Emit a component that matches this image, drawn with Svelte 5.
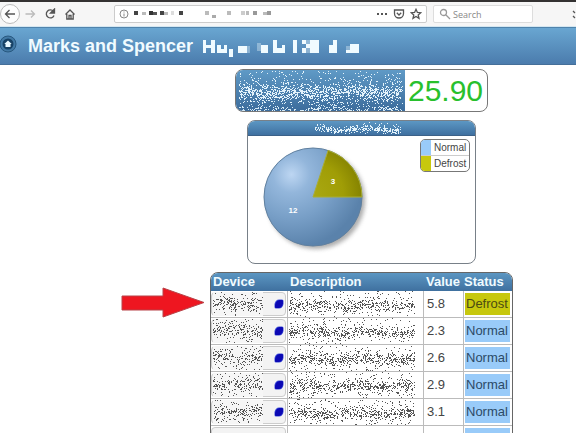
<script>
  const rows = [
    { value: '5.8', status: 'Defrost' },
    { value: '2.3', status: 'Normal' },
    { value: '2.6', status: 'Normal' },
    { value: '2.9', status: 'Normal' },
    { value: '3.1', status: 'Normal' },
    { value: '', status: '' }
  ];

  const titleBlocks = [
    [0, 3, 3, 13], [3, 8, 6, 3], [8, 3, 4, 13], [14, 8, 4, 8], [18, 12, 3, 4], [21, 8, 3, 8],
    [26, 12, 4, 8], [35, 9, 9, 7], [58, 8, 7, 8], [70, 3, 4, 13], [74, 11, 5, 5], [79, 8, 3, 8],
    [90, 3, 4, 13], [99, 3, 4, 4], [103, 7, 4, 4], [99, 11, 4, 5], [107, 3, 9, 13],
    [126, 8, 4, 8], [130, 3, 4, 13], [143, 13, 4, 3], [147, 7, 9, 9]
  ];
  const faintBlocks = [[54, 6, 4, 8], [103, 3, 4, 13], [143, 9, 4, 4], [44, 9, 3, 7]];

  const urlBlocks = [
    [0, 2, 4, 4, '#444'], [8, 3, 4, 3, '#bbb'], [15, 2, 4, 4, '#333'], [19, 3, 4, 3, '#555'],
    [26, 2, 4, 4, '#444'], [30, 3, 4, 3, '#bbb'], [37, 2, 3, 4, '#ddd'], [45, 2, 4, 4, '#444'],
    [71, 2, 4, 4, '#bbb'], [78, 6, 4, 3, '#aaa'], [93, 2, 4, 4, '#bbb'], [107, 2, 4, 4, '#ccc'],
    [112, 2, 3, 4, '#bbb'], [119, 2, 4, 4, '#999'], [129, 3, 4, 3, '#bbb'], [133, 2, 4, 4, '#999']
  ];

  // Scatter of one-pixel specks, thickest along the line of text it hides.
  function specks(w, h, seed, dense, sparse, centre, spread) {
    let s = seed;
    const rnd = () => {
      s = (s * 1664525 + 1013904223) % 4294967296;
      return s / 4294967296;
    };
    let d = '';
    for (let y = 0; y < h; y++) {
      for (let x = 0; x < w; x++) {
        const k = (y - centre - Math.sin(x / 9 + seed) * 1.2) / spread;
        if (rnd() < sparse + dense * Math.exp(-k * k)) d += `M${x} ${y}h1v1h-1z`;
      }
    }
    return d;
  }
</script>

<div class="page">
  <nav class="toolbar" aria-label="Browser">
    <button class="tool back" aria-label="Back"><svg width="12" height="12" viewBox="0 0 12 12"><path d="M11 6H2M5.5 2 1.5 6l4 4" /></svg></button>
    <button class="tool faint" aria-label="Forward"><svg width="12" height="12" viewBox="0 0 12 12"><path d="M1.5 6H10M7 2.500 10.500 6 7 9.500" /></svg></button>
    <button class="tool" aria-label="Reload"><svg width="12" height="12" viewBox="0 0 12 12"><path d="M9.500 3.500A4 4 0 1 0 10 7.500" /><path class="solid" d="M10.500 1v4H6.500z" /></svg></button>
    <button class="tool" aria-label="Home"><svg width="12" height="12" viewBox="0 0 12 12"><path d="M1.500 6.500 6 2l4.500 4.500M2.800 6v5h6.400V6M5 11V7.500h2V11" /></svg></button>
    <div class="address">
      <svg class="info" width="10" height="10" viewBox="0 0 10 10"><circle cx="5" cy="5" r="4" /><path d="M5 4.500v3M5 2.500v1" /></svg>
      <svg class="url" width="140" height="10" viewBox="0 0 140 10">
        {#each urlBlocks as [x, y, w, h, c]}<rect {x} {y} width={w} height={h} fill={c} />{/each}
      </svg>
      <button class="mini" aria-label="Page actions"><svg width="12" height="12" viewBox="0 0 12 12"><path class="solid" d="M1 5h2v2H1zM5 5h2v2H5zM9 5h2v2H9z" stroke="none" /></svg></button>
      <button class="mini" aria-label="Save to Pocket"><svg width="12" height="12" viewBox="0 0 12 12"><path d="M1.500 2h9v3.500a4.500 4.500 0 0 1-9 0zM3.800 4.800 6 7l2.200-2.200" /></svg></button>
      <button class="mini" aria-label="Bookmark"><svg width="12" height="12" viewBox="0 0 12 12"><path d="m6 1.300 1.400 3.100 3.400.3-2.600 2.200.8 3.400L6 8.500l-3 1.800.8-3.400L1.200 4.700l3.400-.3z" /></svg></button>
    </div>
    <label class="search">
      <svg width="12" height="12" viewBox="0 0 12 12"><circle cx="4.500" cy="4.500" r="3" /><path d="m7 7 4 4" /></svg>
      <input type="search" placeholder="Search" aria-label="Search" />
    </label>
    <button class="more" aria-label="More tools"><svg width="4" height="12" viewBox="0 0 4 12"><path d="m1 3 2 2M1 8l2 2" /></svg></button>
  </nav>

  <header>
    <a class="home" href="#home" aria-label="Home">
      <svg width="18" height="18" viewBox="0 0 18 18">
        <circle cx="9" cy="9" r="8" fill="#4279a5" stroke="#28587f" />
        <circle cx="9" cy="9" r="5.500" fill="#174266" />
        <path d="M9 5.500 5.300 9h1.200v3h5V9h1.200z" fill="#e8f8ff" />
      </svg>
    </a>
    <h1>Marks and Spencer</h1>
    <svg class="masked" width="158" height="20" viewBox="0 0 158 20">
      {#each titleBlocks as [x, y, w, h]}<rect {x} {y} width={w} height={h} fill="#f0fbff" />{/each}
      {#each faintBlocks as [x, y, w, h]}<rect {x} {y} width={w} height={h} fill="#f0fbff" opacity="0.35" />{/each}
    </svg>
  </header>

  <main>
    <section class="counter">
      <div class="name">
        <svg width="164" height="40" viewBox="0 0 164 40"><path d={specks(164, 40, 11, 0.42, 0.05, 21, 7)} fill="#e4f3fb" /><path d={specks(164, 40, 27, 0.26, 0.01, 39, 4)} fill="#d5e9f5" /></svg>
      </div>
      <output>25.90</output>
    </section>

    <section class="chart">
      <div class="bar"><svg width="86" height="12" viewBox="0 0 86 12"><path d={specks(86, 12, 5, 0.5, 0.04, 7, 3)} fill="#e4f3fb" /></svg></div>
      <div class="plot">
        <svg width="112" height="112" viewBox="0 0 112 112" role="img" aria-label="Normal 12, Defrost 3">
          <defs>
            <radialGradient id="sheen" cx="0.280" cy="0.270" r="0.750">
              <stop offset="0" stop-color="#bdd6f2" />
              <stop offset="0.250" stop-color="#93b6db" />
              <stop offset="0.600" stop-color="#789fc7" />
              <stop offset="1" stop-color="#5a82ab" />
            </radialGradient>
            <radialGradient id="olive" gradientUnits="userSpaceOnUse" cx="50" cy="48" r="52">
              <stop offset="0" stop-color="#a9a812" />
              <stop offset="0.600" stop-color="#a09d06" />
              <stop offset="1" stop-color="#828000" />
            </radialGradient>
            <filter id="soft"><feGaussianBlur stdDeviation="2" /></filter>
          </defs>
          <circle cx="54" cy="54" r="49" fill="#777" opacity="0.600" filter="url(#soft)" />
          <circle cx="51" cy="51" r="49" fill="url(#sheen)" stroke="#60809f" />
          <path d="M51 51H100A49 49 0 0 0 66.140 4.400Z" fill="url(#olive)" stroke="#a9ad35" />
          <text x="71" y="38">3</text>
          <text x="31" y="67">12</text>
        </svg>
        <ul class="legend">
          <li><i class="normal"></i>Normal</li>
          <li><i class="defrost"></i>Defrost</li>
        </ul>
      </div>
    </section>

    <section class="devices">
      <svg class="arrow" width="84" height="32" viewBox="0 0 84 32"><path d="M1 9H42V1L83 15.500 42 30V23H1Z" fill="#ee1620" stroke="#b84248" /></svg>
      <table>
        <thead>
          <tr><th class="device">Device</th><th class="description">Description</th><th class="value">Value</th><th class="status">Status</th></tr>
        </thead>
        <tbody>
          {#each rows as row, i}
            <tr>
              <td class="device">
                <button aria-label="Open device {i + 1}">
                  {#if row.value}
                    <svg class="cover" width="50" height="24" viewBox="0 0 50 24"><rect width="50" height="24" fill="#f6f6f6" /><path d={specks(50, 24, i * 7 + 3, 0.24, 0.06, 11, 5)} fill="#555" /></svg>
                    <svg class="led" width="10" height="10" viewBox="0 0 10 10"><path d="M5 .5h3q1.500 0 1.500 1.500v3Q8.500 9.500 5 9.500H2Q.5 9.500.5 8V5Q1.500.5 5 .5z" fill="#3e50d8" /><path d="M5.500 1H8q1 0 1 1v2.500Q8 9 4.500 9H2Q1 9 1 8V6Q2 1.500 5.500 1z" fill="#0b08b4" /></svg>
                  {/if}
                </button>
              </td>
              <td class="description">
                {#if row.value}<svg class="cover" width="126" height="26" viewBox="0 0 126 26"><path d={specks(126, 26, i * 13 + 8, 0.34, 0.04, 14, 5)} fill="#555" /></svg>{/if}
              </td>
              <td class="value">{row.value}</td>
              <td class="status"><span class={row.status === 'Defrost' ? 'defrost' : 'normal'}>{row.status}</span></td>
            </tr>
          {/each}
        </tbody>
      </table>
    </section>
  </main>
</div>

<style>
  :global(body) { margin: 0; background: #fff; }
  .page { height: 100vh; overflow: hidden; font-family: "Liberation Sans", Arial, sans-serif; color: #444; }
  .page * { box-sizing: border-box; }
  svg { display: block; flex: none; }
  button { padding: 0; border: 0; background: none; }

  .toolbar { display: flex; align-items: center; height: 27px; border-top: 2px solid #343232; border-bottom: 1px solid #d5e7f1; background: #f6f6f6; }
  .toolbar svg { fill: none; stroke: #555; stroke-width: 1.3; }
  .toolbar .solid { fill: #555; }
  .toolbar .url { stroke: none; }
  .tool { display: flex; align-items: center; justify-content: center; width: 20px; height: 20px; flex: none; }
  .back { border: 1px solid #bbb; border-radius: 50%; background: #fdfdfd; }
  .toolbar .faint svg { stroke: #bbb; }
  .address { display: flex; align-items: center; flex: 1; height: 18px; margin-left: 34px; padding: 0 4px; border: 1px solid #ccc; border-radius: 2px; background: #fff; }
  .toolbar .info { stroke: #888; stroke-width: 1; }
  .url { margin: 0 auto 0 5px; }
  .mini { margin-left: 5px; }
  .search { display: flex; align-items: center; gap: 2px; width: 100px; height: 18px; margin-left: 6px; padding-left: 5px; border: 1px solid #ddd; border-radius: 2px; background: #fff; }
  .toolbar .search svg { stroke: #999; }
  .search input { width: 70px; padding: 0; border: 0; outline: 0; background: none; font: 9px "Open Sans", "Noto Sans", sans-serif; }
  .search input::placeholder { color: #888; opacity: 1; }
  .more { margin-left: 39px; }

  header { display: flex; align-items: center; height: 38px; border-top: 1px solid #5084ad; border-bottom: 1px solid #456f99; background: linear-gradient(#69a6d1, #4b7cad); }
  h1 { margin: 0 10px 0 19px; font-size: 18px; line-height: 20px; color: #f0fbff; white-space: nowrap; }
  .home { margin: 0 0 4px -1px; width: 10px; padding-right: 10px; }
  .masked { margin-top: 2px; }

  main { display: flex; flex-direction: column; align-items: center; padding: 4px 0 0 147px; }
  .counter { display: flex; height: 43px; border: 1px solid #777; border-radius: 8px; overflow: hidden; }
  .name { width: 169px; padding: 1px 0 0 3px; background: linear-gradient(#5f9ac6, #3c6c9c); }
  output { padding: 0 4px 0 3px; font-size: 30px; line-height: 41px; color: #28c02d; }

  .chart { width: 229px; margin-top: 8px; border: 1px solid #788088; border-radius: 8px; overflow: hidden; }
  .bar { display: flex; align-items: center; justify-content: center; height: 15px; padding-right: 8px; background: linear-gradient(#5c97c3, #3f70a0); border-bottom: 1px solid #3c6188; }
  .plot { display: flex; justify-content: space-between; align-items: flex-start; height: 127px; padding: 3px 5px 0 14px; }
  .plot > svg { margin-top: 7px; }
  .plot text { font-size: 8px; font-weight: bold; fill: #fff; text-anchor: middle; }
  .legend { width: 50px; margin: 0; padding: 0; list-style: none; border: 1px solid #777; border-radius: 5px; overflow: hidden; font-size: 10px; line-height: 15px; }
  .legend li { display: flex; gap: 3px; }
  .legend li + li { border-top: 1px solid #ccc; }
  .legend i { width: 10px; }
  .normal { background: #99cbf9; }
  .defrost { background: #c7c80d; }

  .devices { position: relative; margin-top: 8px; }
  .arrow { position: absolute; left: -89px; top: 15px; }
  table { border-collapse: separate; border-spacing: 0; table-layout: fixed; width: 303px; border: 1px solid #666; border-radius: 8px 8px 0 0; overflow: hidden; font-size: 13px; }
  th { height: 18px; padding: 0 0 0 2px; text-align: left; line-height: 18px; color: #f0fbff; }
  thead { background: linear-gradient(#5b96c2, #3f709f); }
  td { height: 27px; padding: 0; border-bottom: 1px solid #bbb; border-right: 1px solid #bbb; line-height: 26px; }
  td:last-child { border-right: 0; }
  .device { width: 77px; }
  .description { width: 136px; }
  .value { width: 40px; }
  th.status { padding-left: 0; }
  td.value { padding-left: 3px; }
  td.device button { display: flex; align-items: center; justify-content: space-between; width: 75px; height: 24px; padding-right: 1px; border: 1px solid #ccc; border-radius: 4px; background: #f3f3f3; }
  td svg.cover { margin-left: 1px; }
  td.status { padding: 0 2px 0 1px; }
  td.status span { display: block; height: 22px; padding-left: 1px; line-height: 22px; }
  td.status .normal { color: #2c4a66; }
  td.status .defrost { color: #4b4b12; }
</style>
